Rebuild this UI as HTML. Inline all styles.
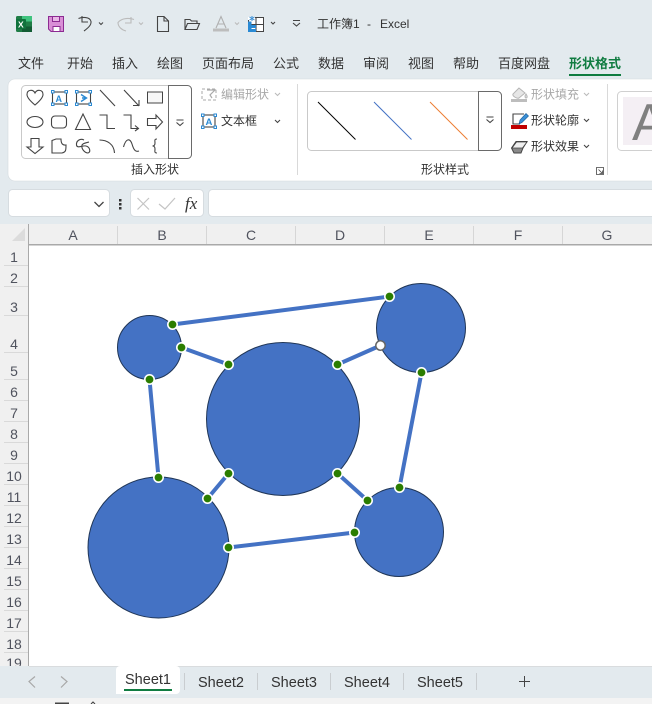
<!DOCTYPE html>
<html><head><meta charset="utf-8"><style>
html,body{margin:0;padding:0;background:#fff;overflow:hidden}
svg{display:block}
text{font-family:"Liberation Sans","Noto Sans CJK SC",sans-serif;fill:#333}
.t{font-size:13px}.s{font-size:12px}.d{fill:#a8a8a8}
.h{font-size:14px;fill:#50535e;text-anchor:middle}
.tab{font-size:14.5px;fill:#333;text-anchor:middle}
.i{fill:none;stroke:#444;stroke-width:1.1}
.b{fill:none;stroke:#3a8fd6;stroke-width:1}
.c{fill:#4472c4;stroke:#1f3556;stroke-width:1}
.l{stroke:#4472c4;stroke-width:4;fill:none}
.g{fill:#2b7d00;stroke:#fff;stroke-width:1.6}
.sq{fill:#fff;stroke:#2a8ad4;stroke-width:1}
</style></head><body>
<svg width="652" height="704" viewBox="0 0 652 704" xmlns="http://www.w3.org/2000/svg">
<rect width="652" height="704" fill="#e3eaee"/>
<!-- title bar -->
<rect x="16" y="16" width="16" height="16" rx="1.5" fill="#1f7d46"/>
<rect x="22" y="16" width="10" height="5.500" fill="#3fc37e"/>
<rect x="22" y="26.500" width="10" height="5.500" fill="#125c34"/>
<rect x="16" y="19" width="10" height="10" rx="1" fill="#10723c"/>
<text x="18" y="27.500" style="font-size:8.500px;font-weight:bold;fill:#fff">X</text>
<path d="M48.500 16.500H63.500V31.500H51L48.500 29Z" fill="#d98fd6" stroke="#8c2b92"/>
<rect x="52.500" y="16.500" width="7" height="5" fill="#e9b8e6" stroke="#8c2b92"/>
<rect x="53" y="26.500" width="7" height="5" fill="#fff" stroke="#8c2b92"/>
<path d="M82 16V22H88M78.500 18.500C82 17 90 16.500 91 21.500C91.500 25 88 28 84 31" class="i"/>
<path d="M99 22.500L101 24.500L103 22.500" class="i"/>
<path d="M131 17V23H125M134 19.500C130 18 122 17.500 118 22.500C118 27 122 30 126 31" class="i" style="stroke:#bbb"/>
<path d="M139 22.500L141 24.500L143 22.500" class="i" style="stroke:#bbb"/>
<path d="M157.500 16.500H164L168.500 21V31.500H157.500ZM164 16.500V21H168.500" class="i"/>
<path d="M185 29.500V19.500H190L191.500 21H197V23.500M185 29.500L187.500 23.500H199.500L197 29.500Z" class="i"/>
<path d="M216 28L221 16.500L226 28M218 24H224" class="i" style="stroke:#b0b0b0"/>
<rect x="213" y="28.500" width="16" height="3" fill="#bdbdbd"/>
<path d="M235 22.500L237 24.500L239 22.500" class="i" style="stroke:#bbb"/>
<rect x="248.500" y="17.500" width="15" height="14" fill="#fff" stroke="#444"/>
<path d="M256 17.500V31.500M248.500 24.500H263.500" class="i"/>
<rect x="248" y="17" width="7" height="3" fill="#fff"/><path d="M252 16V21M249.500 17L254.500 20M254.500 17L249.500 20" class="b"/>
<rect x="248" y="21.500" width="3.500" height="10.500" fill="#2a8ad4"/><rect x="248" y="25" width="8" height="3" fill="#2a8ad4"/><rect x="248" y="29" width="8" height="3" fill="#2a8ad4"/>
<path d="M271 22L273 24L275 22" class="i"/>
<path d="M293 20.500H300M293 23L296.500 26L300 23" class="i"/>
<text x="317" y="28" class="s">工作簿1</text><text x="367" y="28" class="s">-</text><text x="380" y="28" class="s">Excel</text>
<!-- tabs -->
<text x="18" y="68" class="t">文件</text><text x="67" y="68" class="t">开始</text><text x="112" y="68" class="t">插入</text><text x="157" y="68" class="t">绘图</text><text x="202" y="68" class="t">页面布局</text><text x="273" y="68" class="t">公式</text><text x="318" y="68" class="t">数据</text><text x="363" y="68" class="t">审阅</text><text x="408" y="68" class="t">视图</text><text x="453" y="68" class="t">帮助</text><text x="498" y="68" class="t">百度网盘</text>
<text x="569" y="68" class="t" style="fill:#107c41;font-weight:bold">形状格式</text>
<rect x="569" y="74" width="52" height="2" fill="#107c41"/>
<!-- ribbon -->
<rect x="8" y="79" width="660" height="102" rx="7" fill="#fff" stroke="#d3dade" stroke-width=".6"/>
<rect x="21.500" y="85.500" width="170" height="73" rx="4" fill="#fff" stroke="#c9c9c9"/>
<path d="M168.500 85.500H187.500A4 4 0 0 1 191.500 89.500V154.500A4 4 0 0 1 187.500 158.500H168.500Z" fill="#fff" stroke="#6a6a6a"/>
<path d="M176.500 120H183.500M176.500 122.500L180 125.500L183.500 122.500" class="i"/>
<path d="M35 105C29 100 27 97 27 94.500C27 89.500 33 89 35 93C37 89 43 89.500 43 94.500C43 97 41 100 35 105Z" class="i"/>
<rect x="52.500" y="92" width="14" height="12" class="i"/>
<text x="55.500" y="102" style="font-size:9px;font-weight:bold;fill:#2a8ad4">A</text>
<rect x="51.500" y="90.500" width="2.500" height="2.500" class="sq"/><rect x="65" y="90.500" width="2.500" height="2.500" class="sq"/><rect x="51.500" y="103" width="2.500" height="2.500" class="sq"/><rect x="65" y="103" width="2.500" height="2.500" class="sq"/>
<rect x="76.500" y="92" width="14" height="12" class="i"/>
<path d="M81 94.500L86.500 98L81 101.500M82 98H86" style="fill:none;stroke:#2a8ad4;stroke-width:1.400"/>
<rect x="75.500" y="90.500" width="2.500" height="2.500" class="sq"/><rect x="89" y="90.500" width="2.500" height="2.500" class="sq"/><rect x="75.500" y="103" width="2.500" height="2.500" class="sq"/><rect x="89" y="103" width="2.500" height="2.500" class="sq"/>
<path d="M100 90L115 106" class="i"/>
<path d="M124 90L139 106M133 105.500H139V100" class="i"/>
<rect x="147.500" y="92" width="15" height="11" fill="#f7f7f7" stroke="#444"/>
<ellipse cx="35" cy="122" rx="8" ry="5.500" class="i"/>
<rect x="51.500" y="116" width="15" height="12" rx="3.500" class="i"/>
<path d="M83 114L75.500 129.500H90.500Z" class="i"/>
<path d="M99.500 115H107V128.500H115" class="i"/>
<path d="M123.500 115H131V128.500H138M135 125.500L138.500 128.500L135 131" class="i"/>
<path d="M147.500 118.500H156V115L162.500 122L156 129V125.500H147.500Z" class="i"/>
<path d="M31 138.500H39V147H43L35 153.500L27 147H31Z" class="i"/>
<path d="M52 140.500L56 139H61C61 144 63 145.500 66 145C66 150 66 152 62 153H52Z" class="i"/>
<path d="M84 140C80 138 76 141 76.500 145C77 149 83 145 86 146C90 147 91 152 88 153C85 153 81 149 82 145C83 143 86 143 89 142" class="i"/>
<path d="M99.500 140C107 140 114 144 114.500 153" class="i"/>
<path d="M123.500 147C126 138 130 138 132 144C134 151 136 152 139 151" class="i"/>
<path d="M157 139C154 139 155 141 155 143C155 145 154 146 152.500 146C154 146 155 147 155 149C155 151 154 153 157 153" class="i"/>
<text x="131" y="173.500" class="s">插入形状</text>
<g class="b" style="stroke:#aaa;stroke-dasharray:3 2"><rect x="202" y="89" width="14" height="11"/></g>
<path d="M207 90H215L210 95L212 98" style="fill:none;stroke:#aaa;stroke-width:1.200"/>
<text x="221" y="98.500" class="s d">编辑形状</text>
<path d="M275 93L277.500 95.500L280 93" class="i" style="stroke:#bbb"/>
<rect x="203" y="115" width="12" height="12" class="i"/>
<text x="205.500" y="125" style="font-size:9.500px;font-weight:bold;fill:#2a8ad4">A</text>
<rect x="201.500" y="114" width="2.500" height="2.500" class="sq"/><rect x="214" y="114" width="2.500" height="2.500" class="sq"/><rect x="201.500" y="126" width="2.500" height="2.500" class="sq"/><rect x="214" y="126" width="2.500" height="2.500" class="sq"/>
<text x="221" y="125" class="s">文本框</text>
<path d="M275 120L277.500 122.500L280 120" class="i"/>
<rect x="297" y="84" width="1" height="91" fill="#d9d9d9"/>
<rect x="307.500" y="91.500" width="194" height="59" rx="4" fill="#fff" stroke="#c9c9c9"/>
<path d="M478.500 91.500H497.500A4 4 0 0 1 501.500 95.500V146.500A4 4 0 0 1 497.500 150.500H478.500Z" fill="#fff" stroke="#6a6a6a"/>
<path d="M486.500 117H493.500M486.500 119.500L490 122.500L493.500 119.500" class="i"/>
<path d="M318 102L355.500 139.500" stroke="#000" stroke-width="1"/>
<path d="M374 102L411.500 139.500" stroke="#4472c4" stroke-width="1"/>
<path d="M430 102L467.500 139.500" stroke="#ed7d31" stroke-width="1"/>
<path d="M519 88L513 94C512 96 517 99 519 98L525 93ZM526 94C528 97 527 98 526 98C525 98 524.500 96 526 94Z" fill="#e6e6e6" stroke="#b5b5b5"/>
<rect x="511" y="99" width="16" height="3" fill="#bdbdbd"/>
<text x="531" y="98.500" class="s d">形状填充</text>
<path d="M584 93L586.500 95.500L589 93" class="i" style="stroke:#bbb"/>
<path d="M524 114H513V124H520" class="i"/>
<path d="M519 124L520 120L526 113.500L528.500 116L522 122.500Z" fill="#3a8fd6" stroke="#20659f" stroke-width=".7"/>
<rect x="511" y="125" width="16" height="4" fill="#c00000"/>
<text x="531" y="124.500" class="s">形状轮廓</text>
<path d="M584 119L586.500 121.500L589 119" class="i"/>
<path d="M511.500 148L516 141.500H527L523 148L521 153H514Z" fill="#8a8a8a" stroke="#444"/>
<path d="M516.500 142H527L522.500 148H512Z" fill="#f0f0f0" stroke="#444" stroke-width=".8"/>
<text x="531" y="150.500" class="s">形状效果</text>
<path d="M584 145L586.500 147.500L589 145" class="i"/>
<text x="421" y="173.500" class="s">形状样式</text>
<path d="M596.500 167.500H603.500V174.500H596.500ZM598.500 169.500L602.500 173.500M599.500 173.500H602.500V170.500" class="i" style="stroke-width:.8"/>
<rect x="607" y="84" width="1" height="91" fill="#d9d9d9"/>
<rect x="617.500" y="91.500" width="60" height="59" rx="4" fill="#fff" stroke="#d0d0d0"/>
<rect x="623" y="97" width="40" height="48" fill="#f4eff4"/>
<text x="632" y="140" style="font-size:52px;fill:#808080">A</text>
<!-- formula bar -->
<rect x="8.500" y="189.500" width="101" height="27" rx="4" fill="#fff" stroke="#d6dce0"/>
<path d="M94.500 202L99 206.500L103.500 202" class="i" style="stroke-width:1.300"/>
<rect x="119" y="199" width="2.500" height="2.500" fill="#333"/><rect x="119" y="203" width="2.500" height="2.500" fill="#333"/><rect x="119" y="207" width="2.500" height="2.500" fill="#333"/>
<rect x="130.500" y="189.500" width="73" height="27" rx="4" fill="#fff" stroke="#d6dce0"/>
<path d="M137.500 198L149 209.500M149 198L137.500 209.500" stroke="#c4c4c4" fill="none" stroke-width="1.200"/>
<path d="M159 204L165 209L175 198" stroke="#c4c4c4" fill="none" stroke-width="1.200"/>
<text x="185" y="209" style="font-family:'Liberation Serif',serif;font-style:italic;font-size:17px;fill:#333">fx</text>
<rect x="208.500" y="189.500" width="460" height="27" rx="4" fill="#fff" stroke="#d6dce0"/>
<!-- sheet -->
<rect x="0" y="224" width="652" height="442" fill="#f0f0f0"/>
<rect x="29" y="245" width="623" height="421" fill="#fff"/>
<path d="M25 228V241H12Z" fill="#dcdcdc"/>
<rect x="28" y="224" width="1" height="442" fill="#a9a9a9"/>
<rect x="28" y="244" width="624" height="1.500" fill="#a9a9a9"/>
<path d="M117.500 226V244M206.500 226V244M295.500 226V244M384.500 226V244M473.500 226V244M562.500 226V244" stroke="#d6d6d6"/>
<path d="M4 265.500H28M4 286.500H28M4 315.500H28M4 352.500H28M4 379.500H28M4 400.500H28M4 421.500H28M4 442.500H28M4 463.500H28M4 484.500H28M4 505.500H28M4 526.500H28M4 547.500H28M4 568.500H28M4 589.500H28M4 610.500H28M4 631.500H28M4 652.500H28" stroke="#d9d9d9"/>
<text x="73" y="240" class="h">A</text><text x="162" y="240" class="h">B</text><text x="251" y="240" class="h">C</text><text x="340" y="240" class="h">D</text><text x="429" y="240" class="h">E</text><text x="518" y="240" class="h">F</text><text x="607" y="240" class="h">G</text>
<text x="14" y="262" class="h">1</text><text x="14" y="283" class="h">2</text><text x="14" y="312" class="h">3</text><text x="14" y="349" class="h">4</text><text x="14" y="376" class="h">5</text><text x="14" y="397" class="h">6</text><text x="14" y="418" class="h">7</text><text x="14" y="439" class="h">8</text><text x="14" y="460" class="h">9</text><text x="14" y="481" class="h">10</text><text x="14" y="502" class="h">11</text><text x="14" y="523" class="h">12</text><text x="14" y="544" class="h">13</text><text x="14" y="565" class="h">14</text><text x="14" y="586" class="h">15</text><text x="14" y="607" class="h">16</text><text x="14" y="628" class="h">17</text><text x="14" y="649" class="h">18</text><text x="14" y="668" class="h">19</text>
<!-- diagram -->
<path class="l" d="M172.500 324.500L389.500 296.500M181.500 347.500L228.500 364.500M337.500 364.500L380.500 345.500M149.500 379.500L158.500 477.500M421.500 372.500L399.500 487.500M228.500 473.500L207.500 498.500M337.500 473.500L367.500 500.500M228.500 547.500L354.500 532.500"/>
<circle class="c" cx="149.500" cy="347.500" r="32"/>
<circle class="c" cx="421" cy="328" r="44.500"/>
<circle class="c" cx="283" cy="419" r="76.500"/>
<circle class="c" cx="158.500" cy="547.500" r="70.500"/>
<circle class="c" cx="399" cy="532" r="44.500"/>
<g transform="translate(.5 .5)">
<circle class="g" cx="172" cy="324" r="4.700"/><circle class="g" cx="389" cy="296" r="4.700"/><circle class="g" cx="181" cy="347" r="4.700"/><circle class="g" cx="228" cy="364" r="4.700"/><circle class="g" cx="337" cy="364" r="4.700"/><circle class="g" cx="149" cy="379" r="4.700"/><circle class="g" cx="158" cy="477" r="4.700"/><circle class="g" cx="421" cy="372" r="4.700"/><circle class="g" cx="399" cy="487" r="4.700"/><circle class="g" cx="228" cy="473" r="4.700"/><circle class="g" cx="207" cy="498" r="4.700"/><circle class="g" cx="337" cy="473" r="4.700"/><circle class="g" cx="367" cy="500" r="4.700"/><circle class="g" cx="228" cy="547" r="4.700"/><circle class="g" cx="354" cy="532" r="4.700"/>
</g>
<circle cx="380.500" cy="345.500" r="4.700" fill="#fff" stroke="#666" stroke-width="1.500"/>
<!-- tab bar -->
<rect x="0" y="666" width="652" height="32" fill="#e3eaee"/>
<rect x="29" y="666" width="623" height="1" fill="#d9dcde"/>
<rect x="0" y="698" width="652" height="6" fill="#f3f3f3"/>
<rect x="55" y="702.500" width="14" height="1.500" fill="#444"/><path d="M91 704L93 702L95 704" class="i"/>
<path d="M35 677L29 682L35 688M61 677L67 682L61 688" fill="none" stroke="#a8a8a8" stroke-width="1.200" transform="translate(0 -.5)"/>
<path d="M116 694V670A4 4 0 0 1 120 666H176A4 4 0 0 1 180 670V690A4 4 0 0 1 176 694Z" fill="#fff"/>
<rect x="124" y="689" width="48" height="2" fill="#107c41"/>
<text x="148" y="684" class="tab">Sheet1</text>
<text x="221" y="687" class="tab">Sheet2</text><text x="294" y="687" class="tab">Sheet3</text><text x="367" y="687" class="tab">Sheet4</text><text x="440" y="687" class="tab">Sheet5</text>
<path d="M184.500 673V690M257.500 673V690M330.500 673V690M403.500 673V690M476.500 673V690" stroke="#c9cdd0"/>
<path d="M519 681.500H530M524.500 676V687" stroke="#444" fill="none"/>
</svg>
</body></html>
